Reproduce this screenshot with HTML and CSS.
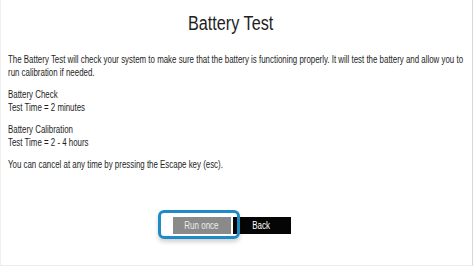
FILE: index.html
```html
<!DOCTYPE html>
<html>
<head>
<meta charset="utf-8">
<link rel="stylesheet" href="styles.css">
</head>
<body>
<div class="page">
  <div class="title-row">
    <h1 class="title">Battery Test</h1>
  </div>
  <div class="content-clip">
    <div class="content">
      <p>The Battery Test will check your system to make sure that the battery is functioning properly. It will test the battery and allow you to run calibration if needed.</p>
      <p>Battery Check<br>Test Time = 2 minutes</p>
      <p>Battery Calibration<br>Test Time = 2 - 4 hours</p>
      <p>You can cancel at any time by pressing the Escape key (esc).</p>
    </div>
  </div>
  <div class="actions">
    <div class="btn-wrap">
      <button class="btn btn-run"><span class="btn-label">Run once</span></button>
      <span class="focus-ring"></span>
    </div>
    <button class="btn btn-back"><span class="btn-label">Back</span></button>
  </div>
</div>
</body>
</html>
```

FILE: styles.css
```css
html, body {
  margin: 0;
  padding: 0;
  background: #ffffff;
}
body {
  width: 474px;
  height: 267px;
  overflow: hidden;
  font-family: "Liberation Sans", Arial, sans-serif;
  color: #1e1e1e;
}
.page {
  box-sizing: border-box;
  width: 473px;
  height: 266px;
  border-left: 1px solid #f0f0f0;
  border-right: 1px solid #d8d8d8;
  border-bottom: 1px solid #ececec;
  overflow: hidden;
}
.title-row {
  display: flex;
  justify-content: center;
  padding-top: 11px;
  padding-right: 12px;
}
.title {
  margin: 0;
  font-size: 20px;
  font-weight: normal;
  line-height: 24px;
  transform: scaleX(0.81);
}
.content-clip {
  padding: 19px 0 0 7px;
  width: 465px;
}
.content {
  width: 592px;
  font-size: 10px;
  line-height: 12.5px;
  transform: scaleX(0.79);
  transform-origin: 0 0;
}
.content p {
  margin: 0 0 10px 0;
}
.actions {
  display: flex;
  justify-content: center;
  gap: 2px;
  padding-right: 10px;
  margin-top: 45px;
}
.btn-wrap {
  position: relative;
  display: flex;
}
.btn {
  border: none;
  width: 58px;
  height: 17px;
  padding: 0;
  font-family: "Liberation Sans", Arial, sans-serif;
  font-size: 10px;
  color: #ececec;
}
.btn-label {
  display: inline-block;
  transform: scaleX(0.8);
}
.btn-run {
  background: #8a8a8a;
}
.btn-back {
  background: #050505;
  color: #ffffff;
}
.focus-ring {
  position: absolute;
  left: -15px;
  top: -7px;
  right: -9px;
  bottom: -5px;
  border: 3px solid #1e8ac6;
  border-radius: 6px;
  box-shadow: 0 3px 4px rgba(0, 0, 0, 0.18);
}
```
